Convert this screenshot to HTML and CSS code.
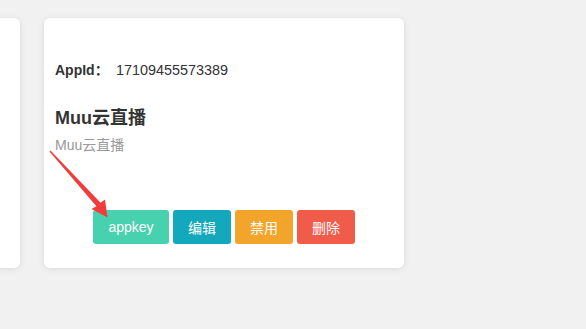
FILE: index.html
```html
<!DOCTYPE html>
<html lang="zh">
<head>
<meta charset="utf-8">
<title>Apps</title>
<link rel="stylesheet" href="styles.css">
</head>
<body>
<div class="list">
  <div class="card"></div>
  <div class="card">
    <div class="appid"><span class="label">AppId：</span><span class="value">17109455573389</span></div>
    <div class="title">Muu云直播</div>
    <div class="desc">Muu云直播</div>
    <div class="actions">
      <button class="btn btn-key">appkey</button>
      <button class="btn btn-edit">编辑</button>
      <button class="btn btn-ban">禁用</button>
      <button class="btn btn-del">删除</button>
    </div>
  </div>
</div>
<svg class="annot" width="586" height="329" viewBox="0 0 586 329">
  <polygon fill="#f23c3c" points="50.5,150.5 100.6,202.7 105,199.5 107.5,217.5 91.5,209 96.4,206.3 49.5,151.5"/>
</svg>
</body>
</html>
```
FILE: styles.css
```css
html, body {
  margin: 0;
  padding: 0;
  background: #f1f1f1;
  font-family: "Liberation Sans", "Noto Sans CJK SC", sans-serif;
  color: #333;
  overflow: hidden;
  width: 586px;
  height: 329px;
}
.list {
  display: flex;
  gap: 24px;
  padding-top: 18px;
  margin-left: -340px;
}
.card {
  flex: 0 0 360px;
  height: 250px;
  box-sizing: border-box;
  background: #fff;
  border-radius: 6px;
  box-shadow: 0 1px 6px rgba(0, 0, 0, 0.1);
  padding: 42px 11px 24px;
  display: flex;
  flex-direction: column;
}
.appid {
  font-size: 14px;
  line-height: 20px;
  display: flex;
}
.appid .label {
  font-weight: bold;
  width: 61px;
}
.appid .value {
  font-size: 14.4px;
}
.title {
  margin-top: 25px;
  font-size: 18px;
  font-weight: bold;
  line-height: 26px;
}
.desc {
  margin-top: 4px;
  font-size: 14px;
  line-height: 20px;
  color: #999;
}
.actions {
  margin-top: 55px;
  display: flex;
  justify-content: center;
  gap: 4px;
}
.btn {
  height: 34px;
  padding: 0 15px;
  border: none;
  border-radius: 3px;
  color: #fff;
  font-family: "Liberation Sans", "Noto Sans CJK SC", sans-serif;
  font-size: 14px;
}
.btn-key { background: #48d1ae; padding: 0 15.5px; }
.btn-edit { background: #13a8bb; }
.btn-ban { background: #f2a52a; }
.btn-del { background: #f05b4a; }
.annot {
  position: absolute;
  left: 0;
  top: 0;
  pointer-events: none;
}
```
